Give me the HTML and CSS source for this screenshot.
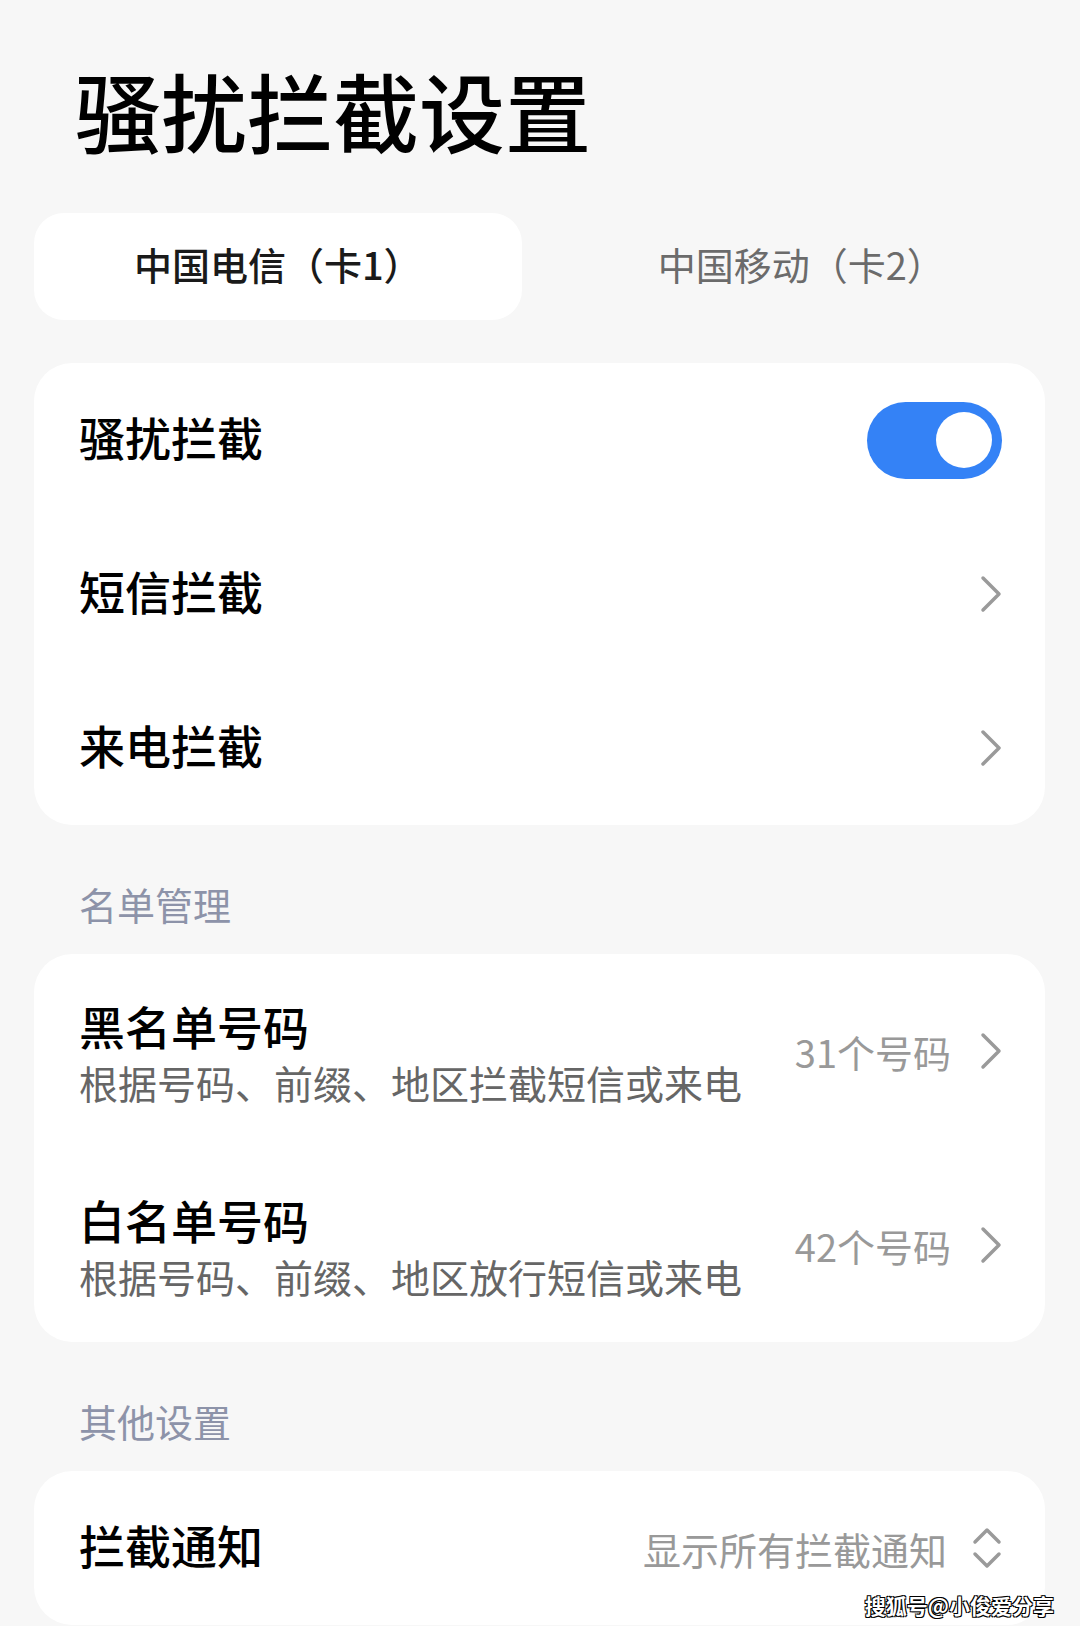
FILE: index.html
```html
<!DOCTYPE html>
<html lang="zh-CN">
<head>
    <meta charset="UTF-8">
    <meta name="viewport" content="width=device-width, initial-scale=1.0">
    <title>骚扰拦截设置</title>
    <link rel="stylesheet" href="styles.css">
</head>
<body>
    <div class="page">
        <h1 class="page-title">骚扰拦截设置</h1>

        <div class="sim-tabs">
            <div class="sim-tab active">中国电信（卡1）</div>
            <div class="sim-tab">中国移动（卡2）</div>
        </div>

        <section class="card">
            <div class="row">
                <span class="row-title">骚扰拦截</span>
                <span class="switch on"><span class="knob"></span></span>
            </div>
            <div class="row">
                <span class="row-title">短信拦截</span>
                <svg class="chevron" width="22" height="38" viewBox="0 0 22 38"><polyline points="3,3 19,19 3,35"/></svg>
            </div>
            <div class="row">
                <span class="row-title">来电拦截</span>
                <svg class="chevron" width="22" height="38" viewBox="0 0 22 38"><polyline points="3,3 19,19 3,35"/></svg>
            </div>
        </section>

        <h2 class="section-label">名单管理</h2>
        <section class="card">
            <div class="row tall">
                <div class="row-text">
                    <div class="row-title">黑名单号码</div>
                    <div class="row-sub">根据号码、前缀、地区拦截短信或来电</div>
                </div>
                <div class="row-end">
                    <span class="row-value">31个号码</span>
                    <svg class="chevron" width="22" height="38" viewBox="0 0 22 38"><polyline points="3,3 19,19 3,35"/></svg>
                </div>
            </div>
            <div class="row tall">
                <div class="row-text">
                    <div class="row-title">白名单号码</div>
                    <div class="row-sub">根据号码、前缀、地区放行短信或来电</div>
                </div>
                <div class="row-end">
                    <span class="row-value">42个号码</span>
                    <svg class="chevron" width="22" height="38" viewBox="0 0 22 38"><polyline points="3,3 19,19 3,35"/></svg>
                </div>
            </div>
        </section>

        <h2 class="section-label">其他设置</h2>
        <section class="card">
            <div class="row">
                <span class="row-title">拦截通知</span>
                <div class="row-end narrow">
                    <span class="row-value">显示所有拦截通知</span>
                    <svg class="updown" width="30" height="44" viewBox="0 0 30 44"><polyline points="3,16 15,4 27,16"/><polyline points="3,28 15,40 27,28"/></svg>
                </div>
            </div>
        </section>
    </div>

    <div class="watermark">搜狐号@小俊爱分享</div>
</body>
</html>
```

FILE: styles.css
```css
body {
    margin: 0;
    background-color: #f7f7f7;
    font-family: "Noto Sans CJK SC", "Noto Sans", sans-serif;
    color: #111;
}
.page {
    padding: 60px 35px 0 34px;
}
.page-title {
    margin: 0 0 0 41px;
    font-size: 86px;
    line-height: 100px;
    font-weight: 500;
    color: #000;
}
.sim-tabs {
    display: grid;
    grid-template-columns: 1fr 1fr;
    gap: 36px;
    margin-top: 53px;
    height: 107px;
}
.sim-tab {
    display: flex;
    align-items: center;
    justify-content: center;
    box-sizing: border-box;
    padding-bottom: 6px;
    border-radius: 30px;
    font-size: 38px;
    color: #6b6b6b;
}
.sim-tab.active {
    background: #fff;
    color: #1a1a1a;
    font-weight: 500;
}
.card {
    background: #fff;
    border-radius: 38px;
}
.sim-tabs + .card {
    margin-top: 43px;
}
.row {
    display: flex;
    align-items: center;
    justify-content: space-between;
    height: 154px;
    padding: 0 43px 0 45px;
}
.row.tall {
    height: 194px;
}
.row-title {
    font-size: 46px;
    line-height: 55px;
    font-weight: 500;
    color: #000;
}
.row > .row-title {
    padding-bottom: 8px;
}
.row-sub {
    margin-top: 6px;
    font-size: 39px;
    line-height: 46px;
    color: #666;
}
.row-end {
    display: flex;
    align-items: center;
    gap: 29px;
}
.row-end.narrow {
    gap: 25px;
}
.row-value {
    font-size: 38px;
    color: #999;
}
.chevron polyline,
.updown polyline {
    fill: none;
    stroke: #9a9a9a;
    stroke-width: 3.5;
    stroke-linecap: round;
    stroke-linejoin: round;
}
.switch {
    display: flex;
    justify-content: flex-end;
    align-items: center;
    box-sizing: border-box;
    width: 135px;
    height: 77px;
    padding: 0 10px;
    border-radius: 39px;
    background: #3482f6;
}
.knob {
    width: 56px;
    height: 56px;
    border-radius: 50%;
    background: #fff;
}
.section-label {
    margin: 0;
    padding: 52px 0 24px 45px;
    font-size: 38px;
    line-height: 53px;
    font-weight: 400;
    color: #8d93a9;
}
.watermark {
    position: absolute;
    right: 26px;
    bottom: 6px;
    font-size: 21px;
    font-weight: 700;
    color: #fff;
    text-shadow: 1px 1px 0 #000, -1px -1px 0 #000, 1px -1px 0 #000, -1px 1px 0 #000;
}
```
